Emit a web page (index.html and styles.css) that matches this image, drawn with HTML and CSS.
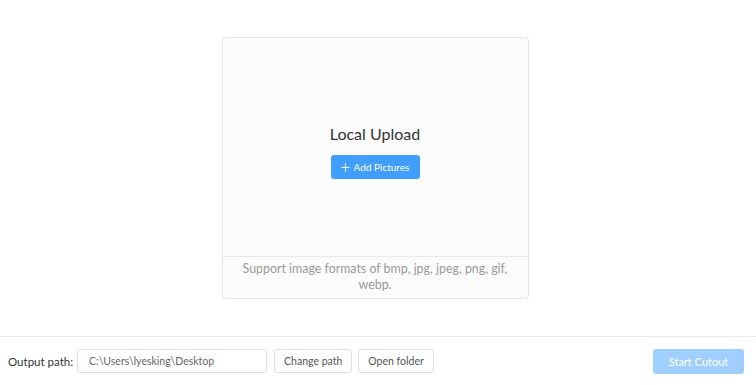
FILE: index.html
```html
<!DOCTYPE html>
<html lang="en">

<head>
  <meta charset="UTF-8" />
  <meta name="viewport" content="width=device-width, initial-scale=1.0" />
  <title>Cutout</title>
  <link rel="stylesheet" href="styles.css">
</head>

<body>
  <main class="main">
    <div class="upload-card">
      <div class="upload-area">
        <h2 class="upload-title">Local Upload</h2>
        <button class="btn-primary" type="button">
          <svg class="plus-icon" width="9" height="9" viewBox="0 0 9 9">
            <path d="M4.5 0.5v8M0.5 4.5h8" stroke="#fff" stroke-width="1.1" fill="none" />
          </svg>
          Add Pictures
        </button>
      </div>
      <div class="upload-tip">Support image formats of bmp, jpg, jpeg, png, gif, webp.</div>
    </div>
  </main>
  <footer class="bottom-bar">
    <span class="path-label">Output path:</span>
    <div class="path-input">C:\Users\lyesking\Desktop</div>
    <button class="btn-plain" type="button">Change path</button>
    <button class="btn-plain" type="button">Open folder</button>
    <button class="btn-start" type="button" disabled>Start Cutout</button>
  </footer>
</body>

</html>
```

FILE: styles.css
```css
* {
  padding: 0;
  margin: 0;
  box-sizing: border-box;
  font-family: Lato, "Open Sans", "Liberation Sans", sans-serif;
}

body {
  width: 756px;
  height: 385px;
  background: #fff;
  display: flex;
  flex-direction: column;
}

.main {
  flex: 1;
  display: flex;
  justify-content: center;
  padding: 37px 6px 0 0;
}

.upload-card {
  width: 307px;
  height: 262px;
  border: 1px solid #e6e6e6;
  border-radius: 4px;
  background: #fcfcfc;
  display: flex;
  flex-direction: column;
}

.upload-area {
  flex: 1;
  display: flex;
  flex-direction: column;
  align-items: center;
  padding-top: 84px;
  border-bottom: 1px solid #e8e8e8;
}

.upload-title {
  font-size: 16px;
  font-weight: 400;
  color: #333;
  line-height: 24px;
  margin-bottom: 9px;
}

.btn-primary {
  width: 89px;
  height: 24px;
  border: none;
  border-radius: 3px;
  background: #409eff;
  color: #fff;
  font-size: 10px;
  display: flex;
  align-items: center;
  justify-content: center;
  gap: 4px;
}

.upload-tip {
  height: 41px;
  padding: 4px 16px 0;
  text-align: center;
  font-size: 12.4px;
  line-height: 16px;
  color: #999;
}

.bottom-bar {
  height: 49px;
  border-top: 1px solid #ececec;
  display: flex;
  align-items: center;
  padding: 0 12px 0 8px;
}

.path-label {
  font-size: 11.5px;
  color: #333;
  margin-right: 4px;
}

.path-input {
  width: 190px;
  height: 24px;
  border: 1px solid #dcdfe6;
  border-radius: 3px;
  padding-left: 11px;
  font-size: 10.5px;
  line-height: 22px;
  color: #666;
  margin-right: 7px;
}

.btn-plain {
  height: 24px;
  padding: 0 9px;
  border: 1px solid #dcdfe6;
  border-radius: 3px;
  background: #fff;
  color: #555;
  font-size: 10.5px;
  margin-right: 6px;
}

.btn-start {
  margin-left: auto;
  width: 91px;
  height: 25px;
  border: none;
  border-radius: 3px;
  background: #a0cfff;
  color: #fff;
  font-size: 11px;
}
```
